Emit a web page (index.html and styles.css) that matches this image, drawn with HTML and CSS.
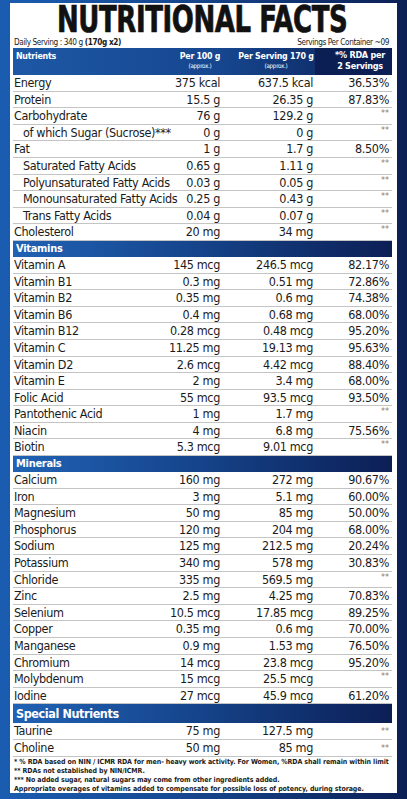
FILE: index.html
```html
<!DOCTYPE html>
<html lang="en">
<head>
    <meta charset="UTF-8">
    <meta name="viewport" content="width=device-width, initial-scale=1.0">
    <title>Nutritional Facts</title>
    <link rel="stylesheet" href="styles.css">
</head>
<body>
    <div class="panel">
        <div class="title-wrap">
            <h1 class="title">NUTRITIONAL FACTS</h1>
        </div>

        <div class="serving">
            <span>Daily Serving : 340 g <b>(170g x2)</b></span>
            <span>Servings Per Container ~09</span>
        </div>

        <table class="facts">
            <colgroup>
                <col class="c-name">
                <col class="c-100">
                <col class="c-serv">
                <col class="c-rda">
            </colgroup>
            <thead>
                <tr>
                    <th class="h-name">Nutrients</th>
                    <th class="h-100">Per 100 g<small>(approx.)</small></th>
                    <th class="h-serv">Per Serving 170 g<small>(approx.)</small></th>
                    <th class="h-rda">*% RDA per<br>2 Servings</th>
                </tr>
            </thead>
            <tbody>
                <tr><td>Energy</td><td>375 kcal</td><td>637.5 kcal</td><td>36.53%</td></tr>
                <tr><td>Protein</td><td>15.5 g</td><td>26.35 g</td><td>87.83%</td></tr>
                <tr><td>Carbohydrate</td><td>76 g</td><td>129.2 g</td><td class="na">**</td></tr>
                <tr><td class="sub">of which Sugar (Sucrose)***</td><td>0 g</td><td>0 g</td><td class="na">**</td></tr>
                <tr><td>Fat</td><td>1 g</td><td>1.7 g</td><td>8.50%</td></tr>
                <tr><td class="sub">Saturated Fatty Acids</td><td>0.65 g</td><td>1.11 g</td><td class="na">**</td></tr>
                <tr><td class="sub">Polyunsaturated Fatty Acids</td><td>0.03 g</td><td>0.05 g</td><td class="na">**</td></tr>
                <tr><td class="sub">Monounsaturated Fatty Acids</td><td>0.25 g</td><td>0.43 g</td><td class="na">**</td></tr>
                <tr><td class="sub">Trans Fatty Acids</td><td>0.04 g</td><td>0.07 g</td><td class="na">**</td></tr>
                <tr><td>Cholesterol</td><td>20 mg</td><td>34 mg</td><td class="na">**</td></tr>
            </tbody>
            <tbody>
                <tr class="section"><th colspan="4">Vitamins</th></tr>
                <tr><td>Vitamin A</td><td>145 mcg</td><td>246.5 mcg</td><td>82.17%</td></tr>
                <tr><td>Vitamin B1</td><td>0.3 mg</td><td>0.51 mg</td><td>72.86%</td></tr>
                <tr><td>Vitamin B2</td><td>0.35 mg</td><td>0.6 mg</td><td>74.38%</td></tr>
                <tr><td>Vitamin B6</td><td>0.4 mg</td><td>0.68 mg</td><td>68.00%</td></tr>
                <tr><td>Vitamin B12</td><td>0.28 mcg</td><td>0.48 mcg</td><td>95.20%</td></tr>
                <tr><td>Vitamin C</td><td>11.25 mg</td><td>19.13 mg</td><td>95.63%</td></tr>
                <tr><td>Vitamin D2</td><td>2.6 mcg</td><td>4.42 mcg</td><td>88.40%</td></tr>
                <tr><td>Vitamin E</td><td>2 mg</td><td>3.4 mg</td><td>68.00%</td></tr>
                <tr><td>Folic Acid</td><td>55 mcg</td><td>93.5 mcg</td><td>93.50%</td></tr>
                <tr><td>Pantothenic Acid</td><td>1 mg</td><td>1.7 mg</td><td class="na">**</td></tr>
                <tr><td>Niacin</td><td>4 mg</td><td>6.8 mg</td><td>75.56%</td></tr>
                <tr><td>Biotin</td><td>5.3 mcg</td><td>9.01 mcg</td><td class="na">**</td></tr>
            </tbody>
            <tbody>
                <tr class="section"><th colspan="4">Minerals</th></tr>
                <tr><td>Calcium</td><td>160 mg</td><td>272 mg</td><td>90.67%</td></tr>
                <tr><td>Iron</td><td>3 mg</td><td>5.1 mg</td><td>60.00%</td></tr>
                <tr><td>Magnesium</td><td>50 mg</td><td>85 mg</td><td>50.00%</td></tr>
                <tr><td>Phosphorus</td><td>120 mg</td><td>204 mg</td><td>68.00%</td></tr>
                <tr><td>Sodium</td><td>125 mg</td><td>212.5 mg</td><td>20.24%</td></tr>
                <tr><td>Potassium</td><td>340 mg</td><td>578 mg</td><td>30.83%</td></tr>
                <tr><td>Chloride</td><td>335 mg</td><td>569.5 mg</td><td class="na">**</td></tr>
                <tr><td>Zinc</td><td>2.5 mg</td><td>4.25 mg</td><td>70.83%</td></tr>
                <tr><td>Selenium</td><td>10.5 mcg</td><td>17.85 mcg</td><td>89.25%</td></tr>
                <tr><td>Copper</td><td>0.35 mg</td><td>0.6 mg</td><td>70.00%</td></tr>
                <tr><td>Manganese</td><td>0.9 mg</td><td>1.53 mg</td><td>76.50%</td></tr>
                <tr><td>Chromium</td><td>14 mcg</td><td>23.8 mcg</td><td>95.20%</td></tr>
                <tr><td>Molybdenum</td><td>15 mcg</td><td>25.5 mcg</td><td class="na">**</td></tr>
                <tr><td>Iodine</td><td>27 mcg</td><td>45.9 mcg</td><td>61.20%</td></tr>
            </tbody>
            <tbody class="special">
                <tr class="section"><th colspan="4">Special Nutrients</th></tr>
                <tr><td>Taurine</td><td>75 mg</td><td>127.5 mg</td><td class="na">**</td></tr>
                <tr><td>Choline</td><td>50 mg</td><td>85 mg</td><td class="na">**</td></tr>
            </tbody>
        </table>

        <div class="notes">
            <p>* % RDA based on NIN / ICMR RDA for men- heavy work activity. For Women, %RDA shall remain within limit</p>
            <p>** RDAs not established by NIN/ICMR.</p>
            <p>*** No added sugar, natural sugars may come from other ingredients added.</p>
            <p>Appropriate overages of vitamins added to compensate for possible loss of potency, during storage.</p>
        </div>
    </div>
</body>
</html>
```

FILE: styles.css
```css
* {
    margin: 0;
    padding: 0;
    box-sizing: border-box;
}

body {
    width: 407px;
    height: 799px;
    overflow: hidden;
    background: linear-gradient(90deg, #1a5cb0 0%, #174a94 40%, #0c1f55 100%);
    font-family: 'DejaVu Sans Condensed', 'Liberation Sans', sans-serif;
    color: #1b1b1b;
}

.panel {
    margin: 3px 10px 0 10px;
    width: 387px;
    height: 790px;
    background: #fff;
    padding: 0 5px 0 3px;
    display: flex;
    flex-direction: column;
}

/* title is squeezed to get the heavy condensed look */
.title-wrap {
    display: flex;
    justify-content: center;
    align-items: flex-start;
    height: 34px;
}

.title {
    font-size: 37px;
    font-weight: bold;
    line-height: 34px;
    white-space: nowrap;
    color: #111;
    letter-spacing: -0.5px;
    -webkit-text-stroke: 0.7px #111;
    transform: scaleX(0.78);
}

.serving {
    display: flex;
    justify-content: space-between;
    align-items: center;
    font-size: 8.2px;
    letter-spacing: -0.4px;
    line-height: 10px;
    height: 11px;
    padding: 0 3px 1px 1px;
}

.facts {
    width: 379px;
    border-collapse: collapse;
    table-layout: fixed;
}

.c-name { width: 137px; }
.c-100 { width: 72px; }
.c-serv { width: 93px; }
.c-rda { width: 77px; }

thead tr {
    background: linear-gradient(90deg, #1d58a6 0%, #16468e 55%, #0c1f55 100%);
    height: 27px;
}

thead th {
    color: #fff;
    font-size: 8.8px;
    font-weight: bold;
    line-height: 10px;
    vertical-align: top;
    padding-top: 3px;
    text-align: center;
    white-space: nowrap;
    letter-spacing: -0.25px;
}

thead th small {
    display: block;
    font-size: 6.2px;
    font-weight: normal;
    line-height: 9px;
}

.h-name {
    text-align: left;
    padding-left: 3px;
}

.h-100 { padding-left: 28px; }
.h-serv { padding-left: 15px; }
.h-rda {
    padding-left: 13px;
    background: #0c1f55;
    font-size: 9px;
    line-height: 11px;
    padding-top: 2px;
}

td {
    font-size: 12.5px;
    letter-spacing: -0.35px;
    line-height: 15.6px;
    text-align: right;
    border-bottom: 1px solid #c4c4c4;
    white-space: nowrap;
}

td:first-child {
    text-align: left;
    padding-left: 1px;
}

td:nth-child(2) { padding-right: 2px; }
td:nth-child(3) { padding-right: 2px; }
td:last-child { padding-right: 3px; }

td.sub { padding-left: 10px; }

td.na {
    font-size: 9px;
    color: #808080;
    vertical-align: top;
    line-height: 11px;
    letter-spacing: 0;
}

.section th {
    background: linear-gradient(90deg, #2062b4 0%, #16468e 45%, #0c1f55 100%);
    color: #fff;
    font-size: 11px;
    letter-spacing: -0.3px;
    font-weight: bold;
    text-align: left;
    padding-left: 3px;
    line-height: 16px;
}

.special .section th {
    font-size: 12.5px;
    letter-spacing: -0.4px;
    line-height: 19px;
}

.special td { line-height: 16px; }

.notes {
    padding: 1px 0 0 1px;
    font-weight: bold;
    font-size: 7px;
    letter-spacing: -0.08px;
    line-height: 8.8px;
    white-space: nowrap;
    color: #1b1b1b;
}
```
